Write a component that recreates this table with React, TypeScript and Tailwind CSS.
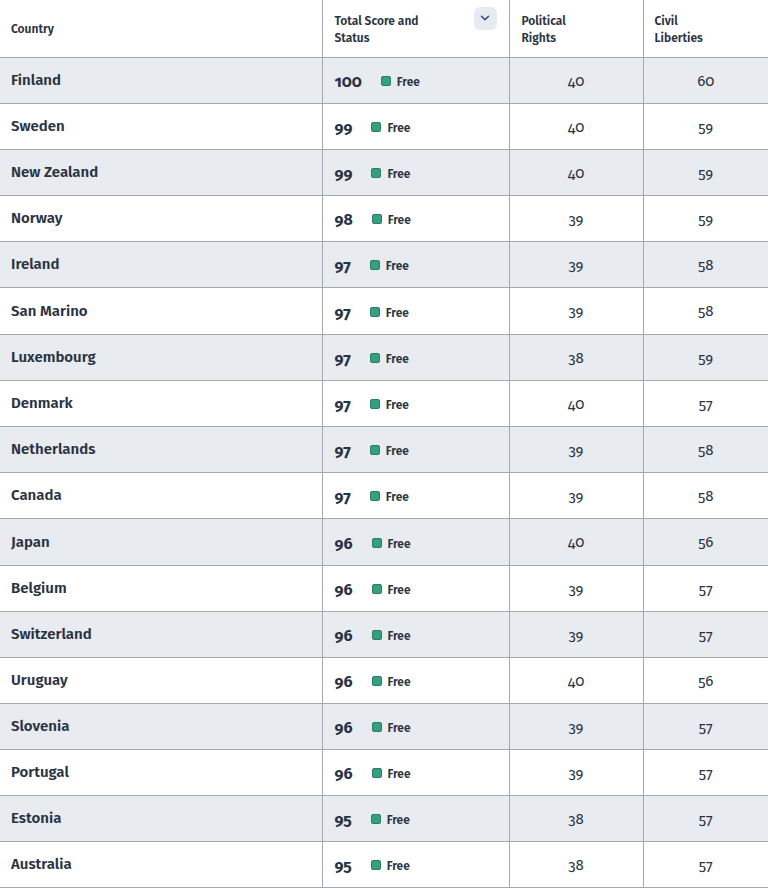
import { ChevronDown } from "lucide-react";

interface IRow {
    country: string
    score: number
    pr: number
    cl: number
}

const rows: IRow[] = [
    { country: "Finland", score: 100, pr: 40, cl: 60 },
    { country: "Sweden", score: 99, pr: 40, cl: 59 },
    { country: "New Zealand", score: 99, pr: 40, cl: 59 },
    { country: "Norway", score: 98, pr: 39, cl: 59 },
    { country: "Ireland", score: 97, pr: 39, cl: 58 },
    { country: "San Marino", score: 97, pr: 39, cl: 58 },
    { country: "Luxembourg", score: 97, pr: 38, cl: 59 },
    { country: "Denmark", score: 97, pr: 40, cl: 57 },
    { country: "Netherlands", score: 97, pr: 39, cl: 58 },
    { country: "Canada", score: 97, pr: 39, cl: 58 },
    { country: "Japan", score: 96, pr: 40, cl: 56 },
    { country: "Belgium", score: 96, pr: 39, cl: 57 },
    { country: "Switzerland", score: 96, pr: 39, cl: 57 },
    { country: "Uruguay", score: 96, pr: 40, cl: 56 },
    { country: "Slovenia", score: 96, pr: 39, cl: 57 },
    { country: "Portugal", score: 96, pr: 39, cl: 57 },
    { country: "Estonia", score: 95, pr: 38, cl: 57 },
    { country: "Australia", score: 95, pr: 38, cl: 57 },
]

const App = () => {
    return (
        <div className="font-['Fira_Sans','Open_Sans',sans-serif] text-[#2a3342] bg-white w-[768px] h-[888px] overflow-hidden">
            <table className="table-fixed border-collapse w-[768px]">
                <colgroup>
                    <col className="w-[322px]" />
                    <col className="w-[187px]" />
                    <col className="w-[134px]" />
                    <col className="w-[125px]" />
                </colgroup>
                <thead>
                    <tr className="h-[57px] border-b border-[#a3a8ad]">
                        <th className="text-left font-semibold text-[12px] pl-[11px] pt-[2px] align-middle">Country</th>
                        <th className="text-left font-semibold text-[12px] pl-[12px] pr-[12px] border-l border-[#a3a8ad] align-middle">
                            <div className="flex justify-between items-start">
                                <span className="leading-[17px] pt-[3px]">Total Score and<br />Status</span>
                                <span className="w-[23px] h-[23px] rounded-md bg-[#e6ebf2] flex items-center justify-center -mt-[3px]">
                                    <ChevronDown size={14} strokeWidth={2.6} className="text-[#2c4a7a]" />
                                </span>
                            </div>
                        </th>
                        <th className="text-left font-semibold text-[12px] pl-[12px] pt-[3px] border-l border-[#a3a8ad] align-middle leading-[17px]">Political<br />Rights</th>
                        <th className="text-left font-semibold text-[12px] pl-[11px] pt-[3px] border-l border-r border-[#a3a8ad] border-r-[#e4e6e9] align-middle leading-[17px]">Civil<br />Liberties</th>
                    </tr>
                </thead>
                <tbody>
                    {rows.map((r, i) => (
                        <tr key={r.country} className={`border-b border-[#a3a8ad] ${i === 5 || i === 10 ? "h-[47px]" : "h-[46px]"} ${i % 2 === 0 ? "bg-[#e8ebf0]" : "bg-white"}`}>
                            <td className="pl-[11px] pt-[1px] text-[15px] font-semibold">{r.country}</td>
                            <td className="pl-[12px] border-l border-[#a3a8ad]">
                                <div className="flex items-center pt-[2px]">
                                    <span className="text-[16px] font-bold oldstyle-nums pt-[2px]">{r.score}</span>
                                    <span className="ml-[19px] w-[10px] h-[10px] rounded-[2px] bg-[#35a07d] border border-[#2a7e63]"></span>
                                    <span className="ml-[6px] text-[12px] font-semibold pt-[2px]">Free</span>
                                </div>
                            </td>
                            <td className="text-center pt-[2px] text-[15px] oldstyle-nums border-l border-[#a3a8ad]">{r.pr}</td>
                            <td className="text-center pt-[2px] text-[15px] oldstyle-nums border-l border-[#a3a8ad]">{r.cl}</td>
                        </tr>
                    ))}
                </tbody>
            </table>
        </div>
    )
}

export default App
